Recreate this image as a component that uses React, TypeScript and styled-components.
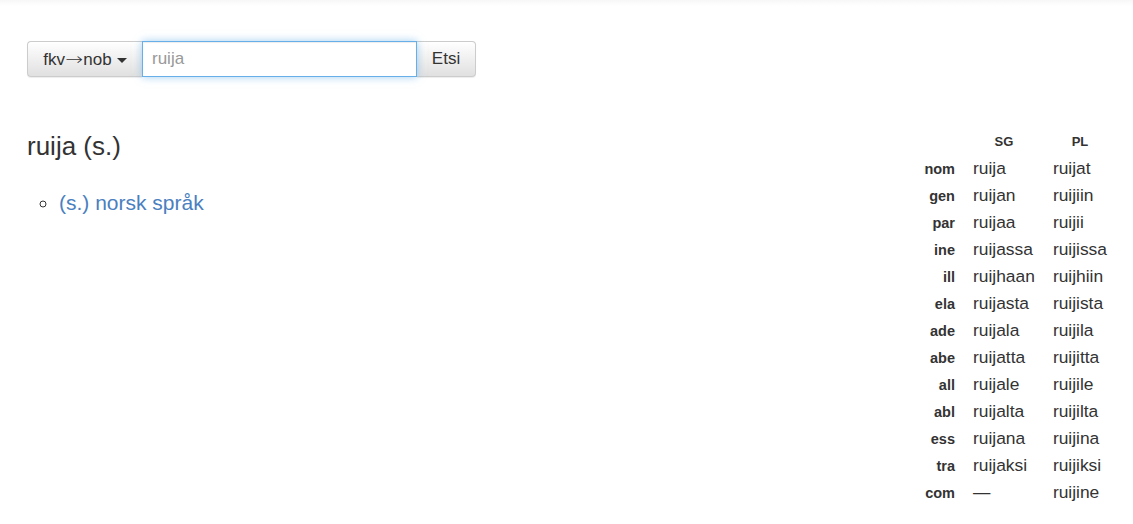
import React from "react";
import styled, { createGlobalStyle } from "styled-components";

const Global = createGlobalStyle`
  html, body { margin: 0; padding: 0; background: #fff; }
  body { font-family: "Liberation Sans", Arial, sans-serif; color: #333; }
`;

const TopShade = styled.div`
  height: 6px;
  background: linear-gradient(#f7f7f7, #fff);
`;

const Page = styled.div`
  padding: 35px 17px 0 27px;
`;

const SearchGroup = styled.form`
  display: flex;
  width: 449px;
  height: 36px;
  margin: 0;
`;

const GradButton = styled.button<{ $side: "left" | "right" }>`
  display: flex;
  align-items: center;
  justify-content: center;
  gap: 5px;
  height: 36px;
  box-sizing: border-box;
  padding: 0;
  font-family: "Liberation Sans", Arial, sans-serif;
  font-size: 17px;
  color: #333;
  background: linear-gradient(#fff, #e0e0e0);
  border: 1px solid #ccc;
  border-radius: ${(p) => (p.$side === "left" ? "4px 0 0 4px" : "0 4px 4px 0")};
  ${(p) => (p.$side === "left" ? "border-right: none;" : "border-left: none;")}
  box-shadow: inset 0 1px 0 rgba(255,255,255,.15), 0 1px 1px rgba(0,0,0,.075);
  cursor: pointer;
`;

const LeftButton = styled(GradButton)`
  width: 115px;
`;

const RightButton = styled(GradButton)`
  width: 59px;
`;

const Arrow = styled.span`
  font-family: "DejaVu Sans", sans-serif;
  font-weight: 200;
  font-size: 17px;
  display: inline-block;
  transform: scaleX(1.25);
  margin: 0 2px;
`;

const Caret = styled.span`
  display: inline-block;
  width: 0;
  height: 0;
  border-top: 5px solid #333;
  border-left: 5px solid transparent;
  border-right: 5px solid transparent;
  margin-top: 2px;
`;

const SearchInput = styled.input`
  flex: 1;
  height: 36px;
  box-sizing: border-box;
  margin: 0;
  padding: 0 9px;
  font-family: "Liberation Sans", Arial, sans-serif;
  font-size: 17px;
  color: #555;
  border: 1px solid #66afe9;
  outline: none;
  box-shadow: inset 0 1px 1px rgba(0,0,0,.075), 0 0 8px rgba(102,175,233,.6);
  position: relative;
  z-index: 1;
  &::placeholder { color: #999; }
`;

const Content = styled.div`
  display: flex;
  justify-content: space-between;
  align-items: flex-start;
  margin-top: 53px;
`;

const Entry = styled.div`
  padding-top: 1px;
`;

const Heading = styled.h3`
  margin: 0;
  font-size: 26px;
  font-weight: 400;
  line-height: 30px;
  color: #333;
`;

const Senses = styled.ul`
  list-style: circle;
  margin: 28px 0 0;
  padding-left: 32px;
  font-size: 21px;
  line-height: 28px;
  li::marker { color: #333; font-size: 20px; }
`;

const SenseLink = styled.a`
  color: #4a80c0;
  text-decoration: none;
`;

const Table = styled.table`
  border-collapse: collapse;
  border-spacing: 0;
  margin-top: -2px;
`;

const HeadCell = styled.th`
  font-size: 13px;
  font-weight: 700;
  text-align: center;
  padding: 0 9px;
  height: 27px;
  color: #333;
`;

const Label = styled.th`
  font-size: 14.5px;
  font-weight: 700;
  text-align: right;
  padding: 0 9px 0 0;
  height: 27px;
  color: #333;
`;

const Cell = styled.td`
  font-size: 17.4px;
  padding: 0 9px;
  height: 27px;
  color: #333;
`;

const rows: [string, string, string][] = [
  ["nom", "ruija", "ruijat"],
  ["gen", "ruijan", "ruijiin"],
  ["par", "ruijaa", "ruijii"],
  ["ine", "ruijassa", "ruijissa"],
  ["ill", "ruijhaan", "ruijhiin"],
  ["ela", "ruijasta", "ruijista"],
  ["ade", "ruijala", "ruijila"],
  ["abe", "ruijatta", "ruijitta"],
  ["all", "ruijale", "ruijile"],
  ["abl", "ruijalta", "ruijilta"],
  ["ess", "ruijana", "ruijina"],
  ["tra", "ruijaksi", "ruijiksi"],
  ["com", "—", "ruijine"],
];

export default function App() {
  return (
    <>
      <Global />
      <TopShade />
      <Page>
        <SearchGroup onSubmit={(e) => e.preventDefault()}>
          <LeftButton type="button" $side="left">
            <span>
              fkv<Arrow>→</Arrow>nob
            </span>
            <Caret />
          </LeftButton>
          <SearchInput placeholder="ruija" autoFocus />
          <RightButton type="submit" $side="right">
            Etsi
          </RightButton>
        </SearchGroup>
        <Content>
          <Entry>
            <Heading>ruija (s.)</Heading>
            <Senses>
              <li>
                <SenseLink href="#">(s.) norsk språk</SenseLink>
              </li>
            </Senses>
          </Entry>
          <Table>
            <thead>
              <tr>
                <th />
                <HeadCell>SG</HeadCell>
                <HeadCell>PL</HeadCell>
              </tr>
            </thead>
            <tbody>
              {rows.map(([c, sg, pl]) => (
                <tr key={c}>
                  <Label>{c}</Label>
                  <Cell>{sg}</Cell>
                  <Cell>{pl}</Cell>
                </tr>
              ))}
            </tbody>
          </Table>
        </Content>
      </Page>
    </>
  );
}
